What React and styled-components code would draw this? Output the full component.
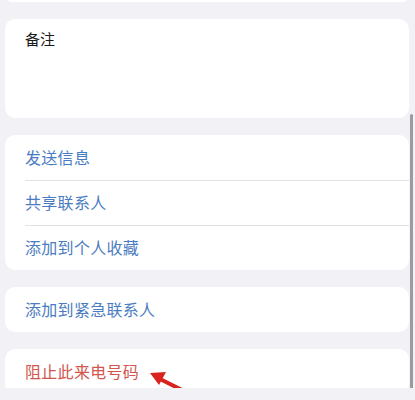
import React from "react";
import styled, { createGlobalStyle } from "styled-components";

const Global = createGlobalStyle`
  html, body { margin: 0; padding: 0; background: #f1f1f6; }
  body { font-family: "Noto Sans CJK SC", "Noto Sans", sans-serif; overflow: hidden; }
`;

const Page = styled.div`
  position: relative;
  width: 415px;
  height: 400px;
  overflow: hidden;
  background: #f1f1f6;
  display: flex;
  flex-direction: column;
  gap: 17px;
  padding: 0 6px 0 5px;
  box-sizing: border-box;
  margin-top: -12px;
`;

const Card = styled.div`
  background: #fff;
  border-radius: 10px;
  flex: none;
  height: ${(p) => p.$h || "auto"};
  display: flex;
  flex-direction: column;
`;

const NoteLabel = styled.div`
  padding: 10px 0 0 20px;
  font-size: 15px;
  color: #1a1a1a;
  line-height: 20px;
`;

const Row = styled.div`
  height: 45px;
  display: flex;
  align-items: center;
  padding-bottom: 2px;
  margin-left: 20px;
  font-size: 16px;
  letter-spacing: 0.3px;
  color: ${(p) => (p.$danger ? "#d1564e" : "#4a7cc2")};
  border-top: ${(p) => (p.$sep ? "1px solid #e2e2e6" : "none")};
  box-sizing: border-box;
`;

const Scrollbar = styled.div`
  position: absolute;
  right: 2px;
  top: 126px;
  width: 3px;
  height: 290px;
  background: #9c9ca0;
  border-radius: 2px;
`;

const Arrow = styled.svg`
  position: absolute;
  left: 140px;
  top: 382px;
`;

export default function App() {
  return (
    <>
      <Global />
      <Page>
        <Card $h="14px" />
        <Card $h="99px">
          <NoteLabel>备注</NoteLabel>
        </Card>
        <Card>
          <Row>发送信息</Row>
          <Row $sep>共享联系人</Row>
          <Row $sep>添加到个人收藏</Row>
        </Card>
        <Card>
          <Row>添加到紧急联系人</Row>
        </Card>
        <Card>
          <Row $danger>阻止此来电号码</Row>
        </Card>
        <Scrollbar />
        <Arrow width="60" height="30" viewBox="0 0 60 30">
          <line x1="46" y1="22" x2="18" y2="8" stroke="#d9231f" strokeWidth="4" strokeLinecap="round" />
          <polygon points="10,3 26,2 19,15" fill="#d9231f" />
        </Arrow>
      </Page>
    </>
  );
}
